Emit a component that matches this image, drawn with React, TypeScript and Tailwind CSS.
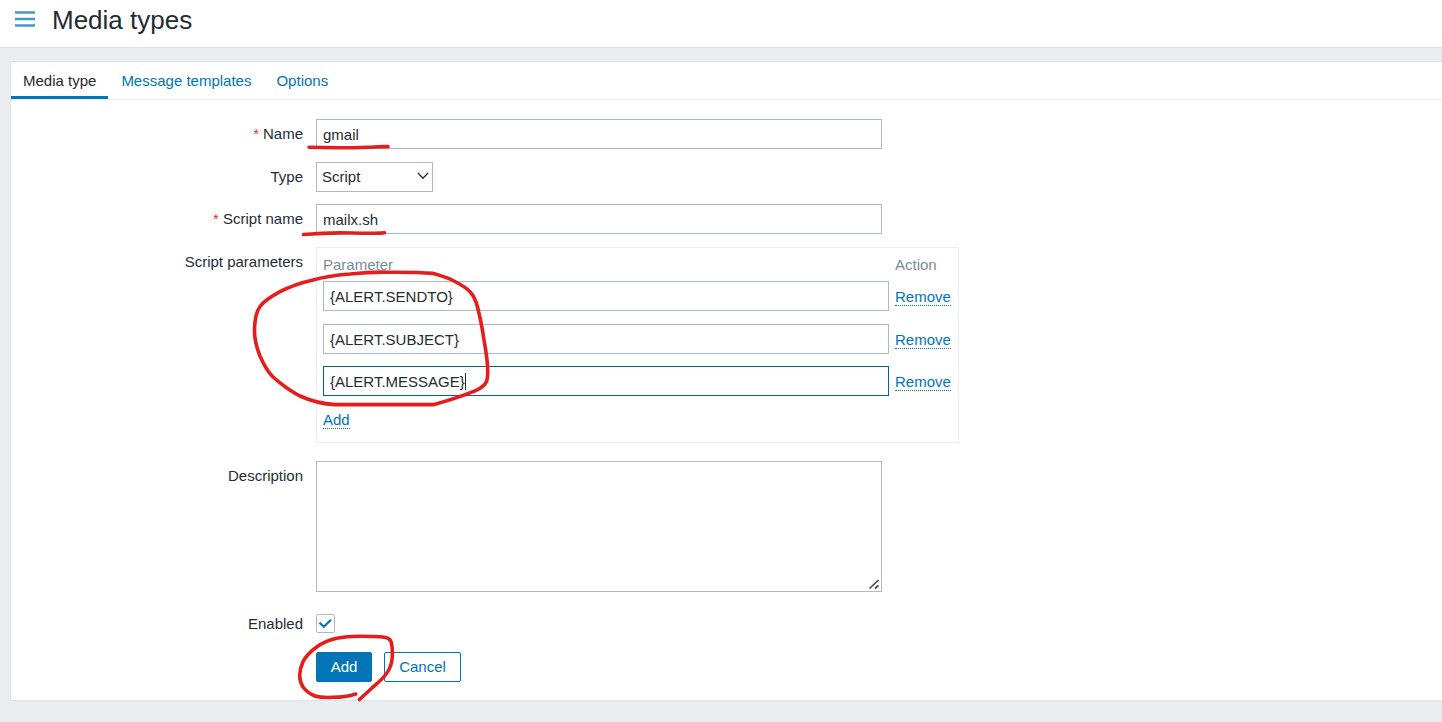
import { useState, type ReactNode } from "react";

const fieldClass =
  "block h-[30px] w-full border border-[#acbbc2] bg-white px-1.5 pt-px text-[#1f2c33] outline-none focus:border-[#00639f]";
const linkClass =
  "border-b border-dotted border-[#0275b8] leading-[17px] text-[#0275b8] cursor-pointer";

type RowProps = {
  label?: string;
  htmlFor?: string;
  required?: boolean;
  className?: string;
  children: ReactNode;
};

function Row({ label, htmlFor, required, className = "", children }: RowProps) {
  return (
    <div className={`flex gap-[13px] ${className}`}>
      <div className="w-[292px] shrink-0 text-right leading-[30px]">
        {label && (
          <label htmlFor={htmlFor}>
            {required && <span className="mr-1 text-[#e33734]">*</span>}
            {label}
          </label>
        )}
      </div>
      <div className="min-w-0 grow">{children}</div>
    </div>
  );
}

function Annotations() {
  return (
    <svg
      className="pointer-events-none absolute top-0 left-0"
      width="520"
      height="720"
      viewBox="0 0 520 720"
      fill="none"
      stroke="#e71d1d"
      strokeWidth="3.6"
      strokeLinecap="round"
      strokeLinejoin="round"
      aria-hidden="true"
    >
      <path d="M309 147.300C330 148 352 147.800 368 147.200C376 146.900 382 146.500 388 146.600" />
      <path d="M303.500 234.500C318 233.200 335 232.500 352 233C365 233.400 376 233.600 384.500 232.800" />
      <path d="M434 404.600L335 404.600C322 404 311 401 300 396C290 391 281 384 273 377C267 371 263 363 260 356C256 346 254 338 254.500 328C255 318 256 312 260 306.500C265 300 272 296 280 291.700C290 286.500 302 282.500 313 280C325 276.500 338 275 350 274C364 272.500 375 272 387 272.200C403 272.200 418 272 433 273.400C440 275.500 447 277.500 453 280.500C459 283.500 466 287.500 470 291.700C474 296 476 301 477.500 307C480 317 482 326 483.500 337C485.500 349 487.500 358 487.700 370C487.800 375 488 378 486.500 381.700C484 386.500 479 389.500 473 391.700C460 397 447 401 434 404.600Z" />
      <path d="M355.700 694C348 696.500 341 697.300 333 697.300C326 697.700 320 697.500 315 696C310 694 306 691 303 687C300.500 683 299.500 680 299.700 675C300 670 301 666 303 661.700C306 656 311 651 316.700 647C323 642.500 329 640 336.700 638.300C344 636.700 351 636.200 360 636.200C368 636.200 377 636.300 383 637C387.500 637.500 390 638.500 391 641.700C392.500 646 392.500 651 392.300 656.700C392 663 390.500 668 386.700 673.300C383 678.500 379 682 373 687L359.500 699.500" />
    </svg>
  );
}

export default function App() {
  const [params, setParams] = useState([
    "{ALERT.SENDTO}",
    "{ALERT.SUBJECT}",
    "{ALERT.MESSAGE}",
  ]);

  return (
    <div className="relative min-h-screen bg-[#e9edf0] font-['Liberation_Sans',Arial,sans-serif] text-[15px] leading-[18px] text-[#1f2c33]">
      <header className="flex h-12 items-start border-b border-[#dfe4e7] bg-white pl-[15px]">
        <button type="button" aria-label="Toggle menu" className="mt-[11px] w-5">
          <svg width="20" height="16" viewBox="0 0 20 16" stroke="#4796cb" strokeWidth="2.4">
            <path d="M0 1.500H20M0 8H20M0 14.500H20" />
          </svg>
        </button>
        <h1 className="ml-[17px] pt-1 text-[26px] leading-8">Media types</h1>
      </header>

      <main className="mt-[13px] ml-2.5 border border-r-0 border-[#dfe4e7] bg-white pb-[18px]">
        <nav className="flex h-[38px] gap-px border-b border-[#ebeef0] text-[#0275b8]">
          <a href="#media" className="h-[37px] border-b-3 border-[#0275b8] px-3 pt-2.5 text-[#1f2c33]">
            Media type
          </a>
          <a href="#templates" className="px-3 pt-2.5">
            Message templates
          </a>
          <a href="#options" className="px-3 pt-2.5">
            Options
          </a>
        </nav>

        <form className="pt-[19px]" onSubmit={(e) => e.preventDefault()}>
          <Row label="Name" htmlFor="name" required>
            <input id="name" className={`${fieldClass} max-w-[566px]`} defaultValue="gmail" />
          </Row>

          <Row label="Type" htmlFor="type" className="mt-[13px]">
            <div className="relative w-[117px]">
              <select
                id="type"
                className="block h-[30px] w-full appearance-none border border-[#acbbc2] bg-white px-[5px] outline-none"
                defaultValue="Script"
              >
                <option>Email</option>
                <option>SMS</option>
                <option>Script</option>
                <option>Webhook</option>
              </select>
              <svg
                className="pointer-events-none absolute top-2.5 right-1"
                width="12"
                height="8"
                viewBox="0 0 12 8"
                fill="none"
                stroke="#1f2c33"
                strokeWidth="1.3"
              >
                <path d="M1 1L6 6.200L11 1" />
              </svg>
            </div>
          </Row>

          <Row label="Script name" htmlFor="script" required className="mt-3">
            <input id="script" className={`${fieldClass} max-w-[566px]`} defaultValue="mailx.sh" />
          </Row>

          <Row label="Script parameters" className="mt-[13px]">
            <div className="h-[196px] w-full max-w-[643px] border border-[#ebeef0] px-1.5">
              <table className="w-full">
                <thead>
                  <tr className="h-[33px] text-left text-[#768d99]">
                    <th className="font-normal">Parameter</th>
                    <th className="w-[57px] font-normal">Action</th>
                  </tr>
                </thead>
                <tbody>
                  {params.map((value, i) => (
                    <tr key={i} className="h-[42px] align-top first:h-[43px]">
                      <td className="pr-1.5">
                        <div className="group relative">
                          <input
                            aria-label={`Parameter ${i + 1}`}
                            className={`${fieldClass} caret-transparent`}
                            value={value}
                            autoFocus={i === params.length - 1}
                            onChange={(e) =>
                              setParams(params.map((p, n) => (n === i ? e.target.value : p)))
                            }
                          />
                          <span
                            aria-hidden="true"
                            className="pointer-events-none absolute top-[7px] left-[7px] hidden h-[17px] border-r border-[#1f2c33] text-transparent select-none group-focus-within:block"
                          >
                            {value}
                          </span>
                        </div>
                      </td>
                      <td className="pt-[7px]">
                        <button
                          type="button"
                          className={linkClass}
                          onClick={() => setParams(params.filter((_, n) => n !== i))}
                        >
                          Remove
                        </button>
                      </td>
                    </tr>
                  ))}
                </tbody>
              </table>
              <button
                type="button"
                className={`mt-[3px] ${linkClass}`}
                onClick={() => setParams([...params, ""])}
              >
                Add
              </button>
            </div>
          </Row>

          <Row label="Description" htmlFor="description" className="mt-[18px]">
            <div className="relative max-w-[566px]">
              <textarea
                id="description"
                className="block h-[131px] w-full resize-y border border-[#acbbc2] bg-white px-1.5 py-1 outline-none"
              />
              <svg
                className="pointer-events-none absolute right-px bottom-px bg-white"
                width="14"
                height="14"
                viewBox="0 0 14 14"
                stroke="#4a4a4a"
                strokeWidth="1.7"
                aria-hidden="true"
              >
                <path d="M2.500 11.500L11.500 3M8 11.500L11.500 8.300" />
              </svg>
            </div>
          </Row>

          <Row label="Enabled" htmlFor="enabled" className="mt-[17px]">
            <div className="relative mt-[5px] h-[19px] w-[19px]">
              <input
                id="enabled"
                type="checkbox"
                defaultChecked
                className="peer block h-[19px] w-[19px] appearance-none rounded-xs border border-[#acbbc2] bg-white"
              />
              <svg
                className="pointer-events-none absolute top-0 left-0 hidden peer-checked:block"
                width="19"
                height="19"
                viewBox="0 0 19 19"
                fill="none"
                stroke="#0275b8"
                strokeWidth="2.2"
              >
                <path d="M3.500 8.700L7.800 12.700L15 5.700" />
              </svg>
            </div>
          </Row>

          <Row className="mt-[13px]">
            <div className="flex gap-3">
              <button
                type="submit"
                className="h-[30px] w-14 rounded-xs border border-[#0275b8] bg-[#0275b8] text-white"
              >
                Add
              </button>
              <button
                type="button"
                className="h-[30px] w-[77px] rounded-xs border border-[#0275b8] bg-white text-[#0275b8]"
              >
                Cancel
              </button>
            </div>
          </Row>
        </form>
      </main>

      <Annotations />
    </div>
  );
}
